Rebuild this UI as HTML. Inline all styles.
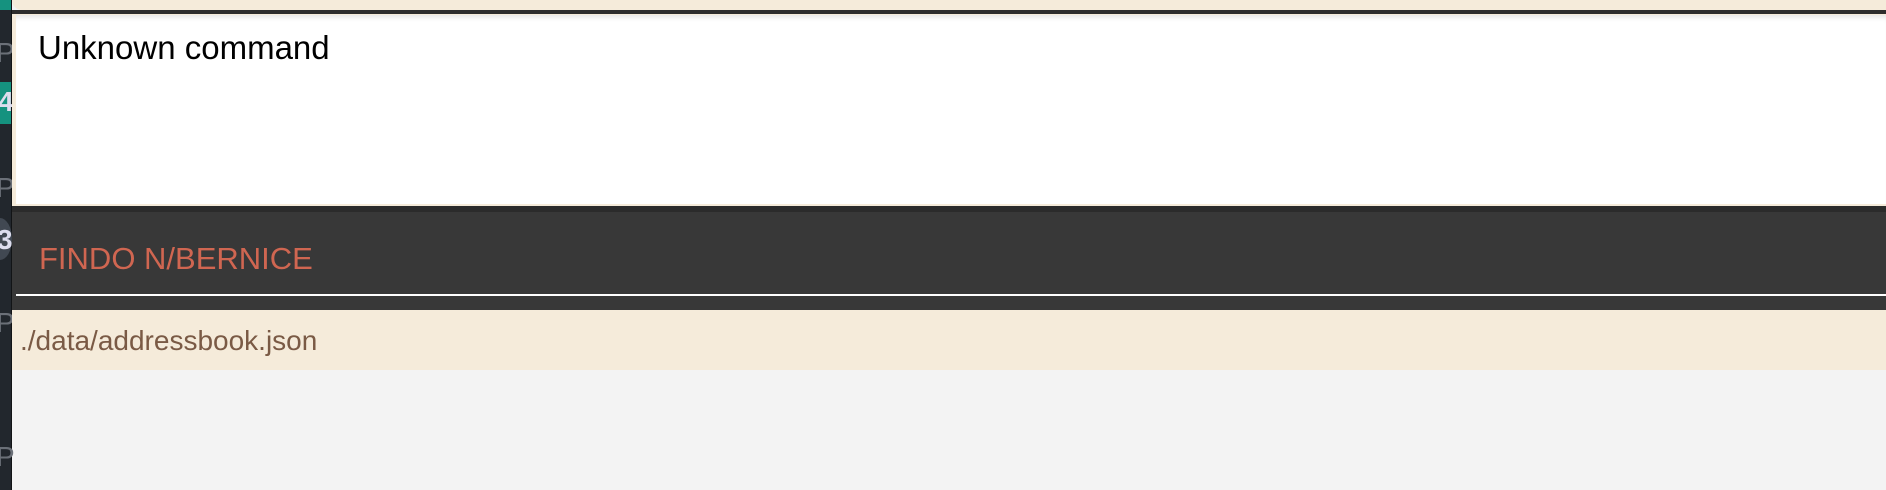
<!DOCTYPE html>
<html><head><meta charset="utf-8"><style>
*{margin:0;padding:0;box-sizing:border-box}
body{width:1886px;height:490px;overflow:hidden;background:#f3f3f3;position:relative;font-family:"Liberation Sans",sans-serif}
.a{position:absolute;white-space:nowrap}
</style></head><body>
<div class="a" style="left:0;top:0;width:11px;height:490px;background:#22272d"></div>
<div class="a" style="left:11px;top:0;width:1px;height:490px;background:#121416"></div>
<div class="a" style="left:0;top:0;width:11px;height:10px;background:#15927f"></div>
<div class="a" style="left:0;top:82px;width:11px;height:42px;background:#15927f"></div>
<div class="a" style="left:-2px;top:86px;color:#dde;font-size:28px;font-weight:bold">4</div>
<div class="a" style="left:-12px;top:218px;width:24px;height:42px;border-radius:50%;background:#414852"></div>
<div class="a" style="left:-3px;top:224px;color:#dde;font-size:28px;font-weight:bold">3</div>
<div class="a" style="left:-4px;top:37px;color:#6b7078;font-size:28px">P</div>
<div class="a" style="left:-4px;top:172px;color:#6b7078;font-size:28px">P</div>
<div class="a" style="left:-4px;top:307px;color:#6b7078;font-size:28px">P</div>
<div class="a" style="left:-4px;top:441px;color:#6b7078;font-size:28px">P</div>

<div class="a" style="left:12px;top:0;width:1874px;height:10px;background:#f5ebda;border-bottom-left-radius:10px"></div>
<div class="a" style="left:12px;top:10px;width:1874px;height:5px;background:#2d2d2d"></div>
<div class="a" style="left:12px;top:14px;width:1874px;height:192px;background:#f5ebda"></div>
<div class="a" style="left:16px;top:15px;width:1870px;height:189px;background:#fff;box-shadow:inset 0 6px 6px -4px rgba(0,0,0,.12)"></div>
<div class="a" style="left:38px;top:29px;font-size:33px;color:#000">Unknown command</div>
<div class="a" style="left:39px;top:241px;font-size:31px;color:#d06651">FINDO N/BERNICE</div>
<div class="a" style="left:12px;top:206px;width:1874px;height:6px;background:#2b2b2b;z-index:-1"></div>
<div class="a" style="left:12px;top:212px;width:1874px;height:98px;background:#383838;z-index:-1"></div>
<div class="a" style="left:16px;top:294px;width:1870px;height:2px;background:#fff"></div>
<div class="a" style="left:12px;top:310px;width:1874px;height:60px;background:#f5ebda"></div>
<div class="a" style="left:20px;top:325px;font-size:28px;color:#7a5a45">./data/addressbook.json</div>
</body></html>
